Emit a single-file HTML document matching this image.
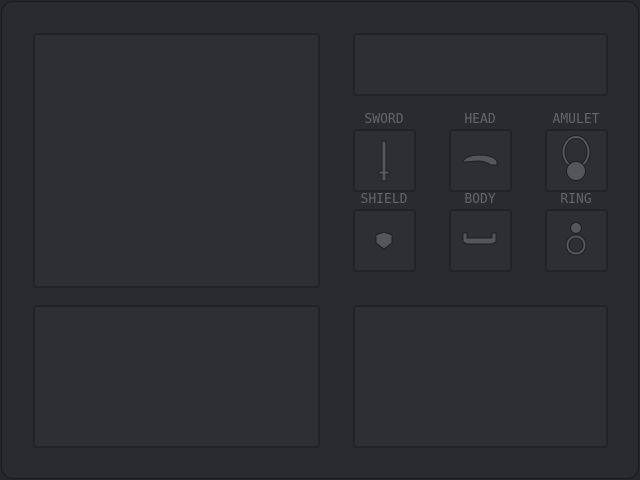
<!DOCTYPE html>
<html><head><style>
html,body{margin:0;padding:0;width:640px;height:480px;background:#26272b;overflow:hidden}
.outer{position:absolute;left:1px;top:1px;width:636px;height:476px;background:#2a2b30;border:1px solid #1a1b1f;border-radius:12px}
.p{position:absolute;background:#2e2f34;border:2px solid #222327;border-radius:4px;box-sizing:border-box}
.lab{position:absolute;width:80px;text-align:center;font:13px "DejaVu Sans Mono","Liberation Mono",monospace;color:#646569;letter-spacing:0px}
svg{position:absolute;left:0;top:0}
</style></head><body>
<div class="outer"></div>
<div class="p" style="left:33px;top:33px;width:287px;height:255px"></div>
<div class="p" style="left:353px;top:33px;width:255px;height:63px"></div>
<div class="p" style="left:33px;top:305px;width:287px;height:143px"></div>
<div class="p" style="left:353px;top:305px;width:255px;height:143px"></div>
<div class="p" style="left:353px;top:129px;width:63px;height:63px"></div>
<div class="p" style="left:449px;top:129px;width:63px;height:63px"></div>
<div class="p" style="left:545px;top:129px;width:63px;height:63px"></div>
<div class="p" style="left:353px;top:209px;width:63px;height:63px"></div>
<div class="p" style="left:449px;top:209px;width:63px;height:63px"></div>
<div class="p" style="left:545px;top:209px;width:63px;height:63px"></div>
<div class="lab" style="left:344px;top:112px">SWORD</div>
<div class="lab" style="left:440px;top:112px">HEAD</div>
<div class="lab" style="left:536px;top:112px">AMULET</div>
<div class="lab" style="left:344px;top:192px">SHIELD</div>
<div class="lab" style="left:440px;top:192px">BODY</div>
<div class="lab" style="left:536px;top:192px">RING</div>
<svg width="640" height="480">
<g fill="#55565b" stroke="#1e1f23" stroke-width="1">
<path d="M382 141 L385 141 L386 144 L386 171 L389 171 L389 174 L386 174 L386 181 L382 181 L382 174 L379 174 L379 171 L382 171 L382 144 Z"/>
<path d="M463 161 Q467 155 480 155 Q492 155 497 161 L497 165 L491 165 Q485 161 478 161 L463 162 Z"/>
<path d="M376 235 L384 232 L392 235 L392 243 L384 249 L376 243 Z"/>
<path d="M463 233 L467 233 L467 238 L492 238 L492 233 L496 233 L496 242 L492 244 L467 244 L463 242 Z"/>
<circle cx="576" cy="228" r="5.5"/>
</g>
<g fill="none" stroke="#1e1f23" stroke-width="4">
<ellipse cx="576" cy="152" rx="12.5" ry="15"/>
<circle cx="576" cy="245" r="8.5"/>
</g>
<g fill="none" stroke="#55565b" stroke-width="2">
<ellipse cx="576" cy="152" rx="12.5" ry="15"/>
<circle cx="576" cy="245" r="8.5"/>
</g>
<circle cx="576" cy="171" r="9.5" fill="#55565b" stroke="#1e1f23"/>
</svg>
</body></html>
